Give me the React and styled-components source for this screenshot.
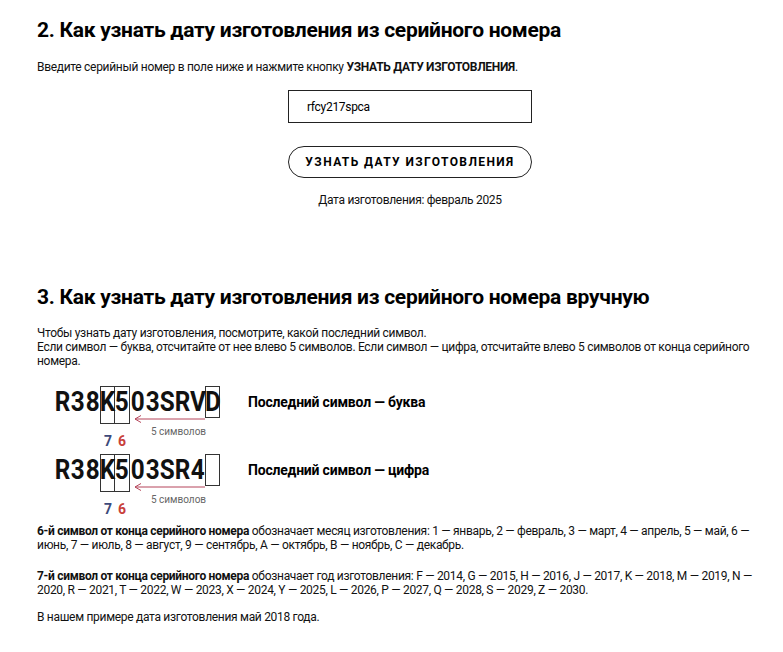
import React from "react";
import styled, { createGlobalStyle } from "styled-components";

const Global = createGlobalStyle`
  html, body { margin: 0; padding: 0; background: #fff; }
  body { font-family: Roboto, "Liberation Sans", sans-serif; color: #000; }
`;

const Page = styled.div`
  padding: 17px 18px 20px 37px;
`;

const Heading = styled.h2`
  margin: 0;
  font-size: 21px;
  line-height: 26px;
  font-weight: 700;
  letter-spacing: -0.28px;
  margin-top: ${(p) => p.$top || 0}px;
`;

const Para = styled.p`
  margin: ${(p) => p.$top || 0}px 0 0;
  font-size: 12px;
  line-height: 14px;
  letter-spacing: -0.3px;
  color: #111;
  b { font-weight: 700; }
`;

const FormColumn = styled.div`
  width: 244px;
  margin-left: 251px;
  margin-top: 16px;
  display: flex;
  flex-direction: column;
  align-items: center;
`;

const SerialInput = styled.input`
  box-sizing: border-box;
  width: 244px;
  height: 33px;
  border: 1px solid #222;
  padding: 0 18px;
  font-family: Roboto, sans-serif;
  font-size: 12px;
  letter-spacing: -0.3px;
  color: #000;
  outline: none;
`;

const PillButton = styled.button`
  box-sizing: border-box;
  margin-top: 23px;
  width: 244px;
  height: 32px;
  border: 1px solid #222;
  border-radius: 16px;
  background: #fff;
  font-family: Roboto, sans-serif;
  font-weight: 700;
  font-size: 12px;
  letter-spacing: 1.4px;
  color: #000;
  cursor: pointer;
`;

const Result = styled.div`
  margin-top: 15px;
  font-size: 12px;
  line-height: 14px;
  letter-spacing: -0.3px;
  color: #111;
`;

const DiagramRow = styled.div`
  display: flex;
  align-items: flex-start;
  margin-top: ${(p) => p.$top || 0}px;
`;

const Figure = styled.div`
  box-sizing: border-box;
  position: relative;
  width: 193px;
  height: 60px;
  padding-left: 18px;
`;

const Serial = styled.div`
  display: flex;
  align-items: flex-start;
`;

const Cell = styled.span`
  box-sizing: border-box;
  width: 15px;
  height: ${(p) => (p.$tall ? 38 : 32)}px;
  display: flex;
  justify-content: center;
  font-size: 27px;
  line-height: 30px;
  font-weight: 700;
  color: #111;
  border: ${(p) => (p.$boxed ? "1px solid #333" : "1px solid transparent")};
  border-left-width: ${(p) => (p.$joined ? 0 : 1)}px;
  span { display: inline-block; transform: scaleX(0.9); }
`;

const Arrow = styled.svg`
  position: absolute;
  left: 96px;
  top: 29px;
`;

const Count = styled.span`
  position: absolute;
  left: 114px;
  top: 40px;
  font-size: 10px;
  color: #666;
`;

const Digit = styled.span`
  position: absolute;
  top: 47px;
  left: ${(p) => p.$left}px;
  font-size: 14px;
  font-weight: 700;
  color: ${(p) => p.$color};
`;

const Label = styled.div`
  margin-top: 8px;
  margin-left: 18px;
  font-size: 14px;
  font-weight: 700;
  letter-spacing: -0.2px;
`;

function SerialFigure({ chars }) {
  return (
    <Figure>
      <Serial>
        {chars.map((c, i) => {
          const isK = i === 3;
          const isFive = i === 4;
          const isLast = i === 10;
          return (
            <Cell
              key={i}
              $boxed={isK || isFive || isLast}
              $tall={isK || isFive}
              $joined={isFive}
            >
              <span>{c}</span>
            </Cell>
          );
        })}
      </Serial>
      <Arrow width="75" height="8" viewBox="0 0 75 8">
        <path d="M2 4 H72" stroke="#b5455a" strokeWidth="1" fill="none" />
        <path d="M8 0.5 L2 4 L8 7.5" stroke="#b5455a" strokeWidth="1" fill="none" />
      </Arrow>
      <Count>5 символов</Count>
      <Digit $left={67} $color="#3d4a7a">7</Digit>
      <Digit $left={81} $color="#c8403a">6</Digit>
    </Figure>
  );
}

export default function App() {
  return (
    <>
      <Global />
      <Page>
        <Heading>2. Как узнать дату изготовления из серийного номера</Heading>
        <Para $top={17}>
          Введите серийный номер в поле ниже и нажмите кнопку <b>УЗНАТЬ ДАТУ ИЗГОТОВЛЕНИЯ</b>.
        </Para>
        <FormColumn>
          <SerialInput defaultValue="rfcy217spca" />
          <PillButton>УЗНАТЬ ДАТУ ИЗГОТОВЛЕНИЯ</PillButton>
          <Result>Дата изготовления: февраль 2025</Result>
        </FormColumn>

        <Heading $top={77}>3. Как узнать дату изготовления из серийного номера вручную</Heading>
        <Para $top={16}>
          Чтобы узнать дату изготовления, посмотрите, какой последний символ.
          <br />
          Если символ — буква, отсчитайте от нее влево 5 символов. Если символ — цифра, отсчитайте влево 5 символов от конца серийного номера.
        </Para>

        <DiagramRow $top={18}>
          <SerialFigure chars={"R38K503SRVD".split("")} />
          <Label>Последний символ — буква</Label>
        </DiagramRow>
        <DiagramRow $top={8}>
          <SerialFigure chars={[..."R38K503SR4".split(""), ""]} />
          <Label>Последний символ — цифра</Label>
        </DiagramRow>

        <Para $top={10}>
          <b>6-й символ от конца серийного номера</b> обозначает месяц изготовления: 1 — январь, 2 — февраль, 3 — март, 4 — апрель, 5 — май, 6 — июнь, 7 — июль, 8 — август, 9 — сентябрь, A — октябрь, B — ноябрь, C — декабрь.
        </Para>
        <Para $top={17}>
          <b>7-й символ от конца серийного номера</b> обозначает год изготовления: F — 2014, G — 2015, H — 2016, J — 2017, K — 2018, M — 2019, N — 2020, R — 2021, T — 2022, W — 2023, X — 2024, Y — 2025, L — 2026, P — 2027, Q — 2028, S — 2029, Z — 2030.
        </Para>
        <Para $top={13}>В нашем примере дата изготовления май 2018 года.</Para>
      </Page>
    </>
  );
}
